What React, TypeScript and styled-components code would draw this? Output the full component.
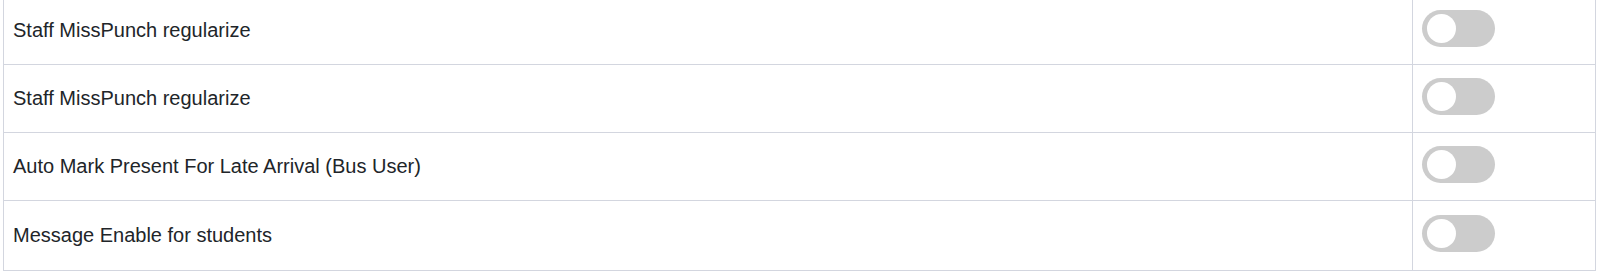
import React, { useState } from "react";
import styled, { createGlobalStyle } from "styled-components";

const GlobalStyle = createGlobalStyle`
  html, body {
    margin: 0;
    padding: 0;
    background: #ffffff;
    overflow: hidden;
  }
  body {
    font-family: "Liberation Sans", Arial, sans-serif;
  }
`;

const Page = styled.div`
  padding: 0 0 0 3px;
`;

const Table = styled.div`
  box-sizing: border-box;
  width: 1593px;
  margin-top: -4px;
  border: 1px solid #d3d6df;
  border-bottom: none;
`;

const Row = styled.div`
  display: grid;
  grid-template-columns: 1fr 183px;
  height: 68px;
  box-sizing: border-box;
  border-bottom: 1px solid #d3d6df;

  &:last-child {
    height: 70px;
  }
`;

const LabelCell = styled.div`
  display: flex;
  align-items: center;
  padding: 0 10px 0 9px;
  font-size: 20px;
  color: #212529;
`;

const ToggleCell = styled.div`
  display: flex;
  align-items: center;
  padding-left: 9px;
  border-left: 1px solid #d3d6df;
`;

const Switch = styled.button<{ $on: boolean }>`
  position: relative;
  width: 73px;
  height: 37px;
  margin-bottom: 5px;
  padding: 0;
  border: none;
  border-radius: 19px;
  background: ${(p) => (p.$on ? "#2196f3" : "#cccccc")};
  cursor: pointer;
  transition: background 0.2s;
`;

const Knob = styled.span<{ $on: boolean }>`
  position: absolute;
  top: 4px;
  left: ${(p) => (p.$on ? "40px" : "5px")};
  width: 29px;
  height: 29px;
  border-radius: 50%;
  background: #ffffff;
  transition: left 0.2s;
`;

const items = [
  "Staff MissPunch regularize",
  "Staff MissPunch regularize",
  "Auto Mark Present For Late Arrival (Bus User)",
  "Message Enable for students",
];

export default function App() {
  const [states, setStates] = useState<boolean[]>(items.map(() => false));
  return (
    <Page>
      <GlobalStyle />
      <Table>
        {items.map((label, i) => (
          <Row key={i}>
            <LabelCell>{label}</LabelCell>
            <ToggleCell>
              <Switch
                $on={states[i]}
                aria-label={label}
                onClick={() =>
                  setStates((s) => s.map((v, j) => (j === i ? !v : v)))
                }
              >
                <Knob $on={states[i]} />
              </Switch>
            </ToggleCell>
          </Row>
        ))}
      </Table>
    </Page>
  );
}
